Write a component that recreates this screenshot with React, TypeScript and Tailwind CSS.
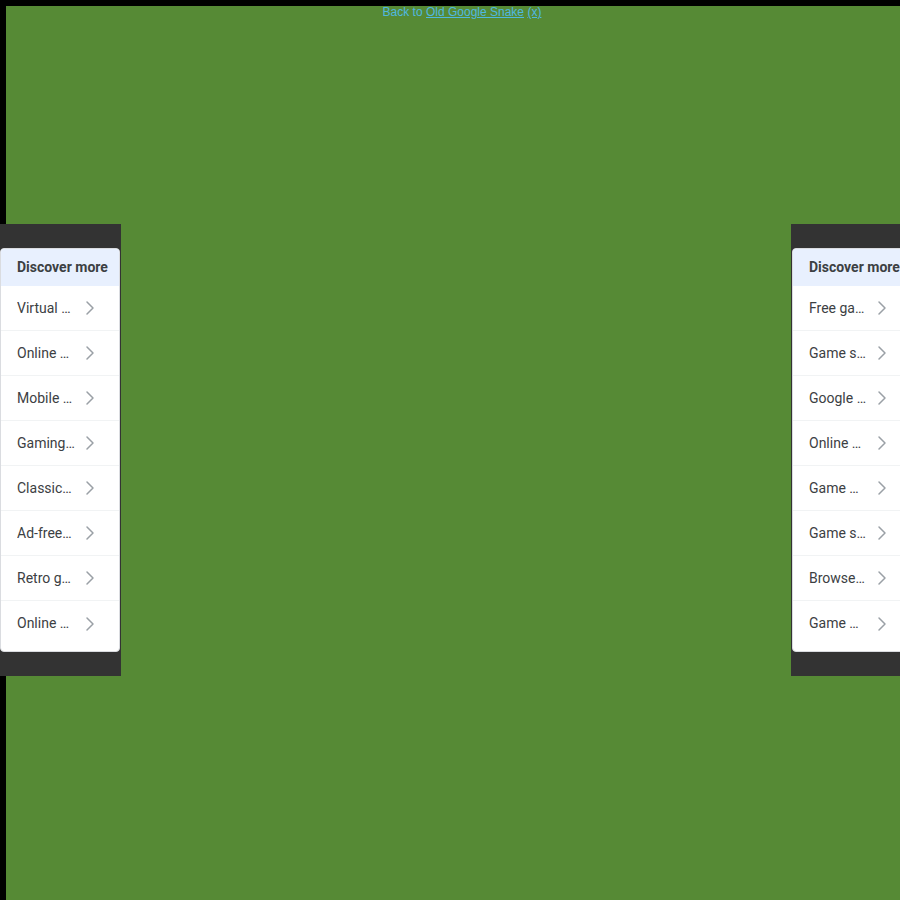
import { ChevronRight } from "lucide-react"

const leftItems = [
  "Virtual pet games",
  "Online multiplayer games",
  "Mobile game apps",
  "Gaming accessories",
  "Classic arcade games",
  "Ad-free games",
  "Retro games",
  "Online word games",
]

const rightItems = [
  "Free games online",
  "Game soundtracks",
  "Google games",
  "Online multiplayer",
  "Game mods",
  "Game subscriptions",
  "Browser games",
  "Game music",
]

function DiscoverCard({ items, side }: { items: string[]; side: "left" | "right" }) {
  return (
    <div
      className={
        side === "left"
          ? "absolute left-0 top-[224px] bg-[#333333] py-6 pr-[1px]"
          : "absolute left-[791px] top-[224px] w-[109px] overflow-hidden bg-[#333333] py-6 pl-[1px]"
      }
    >
      <div className="w-[120px] overflow-hidden rounded-[4px] border border-[#dadce0] bg-white pb-[5px]">
        <div className="flex h-[37px] items-center whitespace-nowrap bg-[#e8f0fe] pl-4 text-[14px] font-bold text-[#3c4043]">
          Discover more
        </div>
        {items.map((item, i) => (
          <div
            key={i}
            className={
              "flex h-[45px] items-center pl-4 text-[14px] text-[#3c4043] " +
              (i < items.length - 1 ? "border-b border-[#f1f3f4]" : "")
            }
          >
            <span className="w-[58px] overflow-hidden text-ellipsis whitespace-nowrap">{item}</span>
            <ChevronRight size={24} strokeWidth={1.5} className="ml-[3px] shrink-0 text-[#9aa0a6]" />
          </div>
        ))}
      </div>
    </div>
  )
}

export default function App() {
  return (
    <div className="relative h-[900px] w-full overflow-hidden bg-black pl-[6px] pt-[6px] font-['Roboto',sans-serif]">
      <div className="h-full w-full bg-[#568a35]">
        <div className="flex justify-center pl-[18px] font-['Liberation_Sans',Arial,sans-serif] text-[12px] leading-[13px] text-[#4fb8e0]">
          <span>
            Back to{" "}
            <a href="#" className="underline">
              Old Google Snake
            </a>{" "}
            <a href="#" className="underline">
              (x)
            </a>
          </span>
        </div>
      </div>
      <DiscoverCard items={leftItems} side="left" />
      <DiscoverCard items={rightItems} side="right" />
    </div>
  )
}
